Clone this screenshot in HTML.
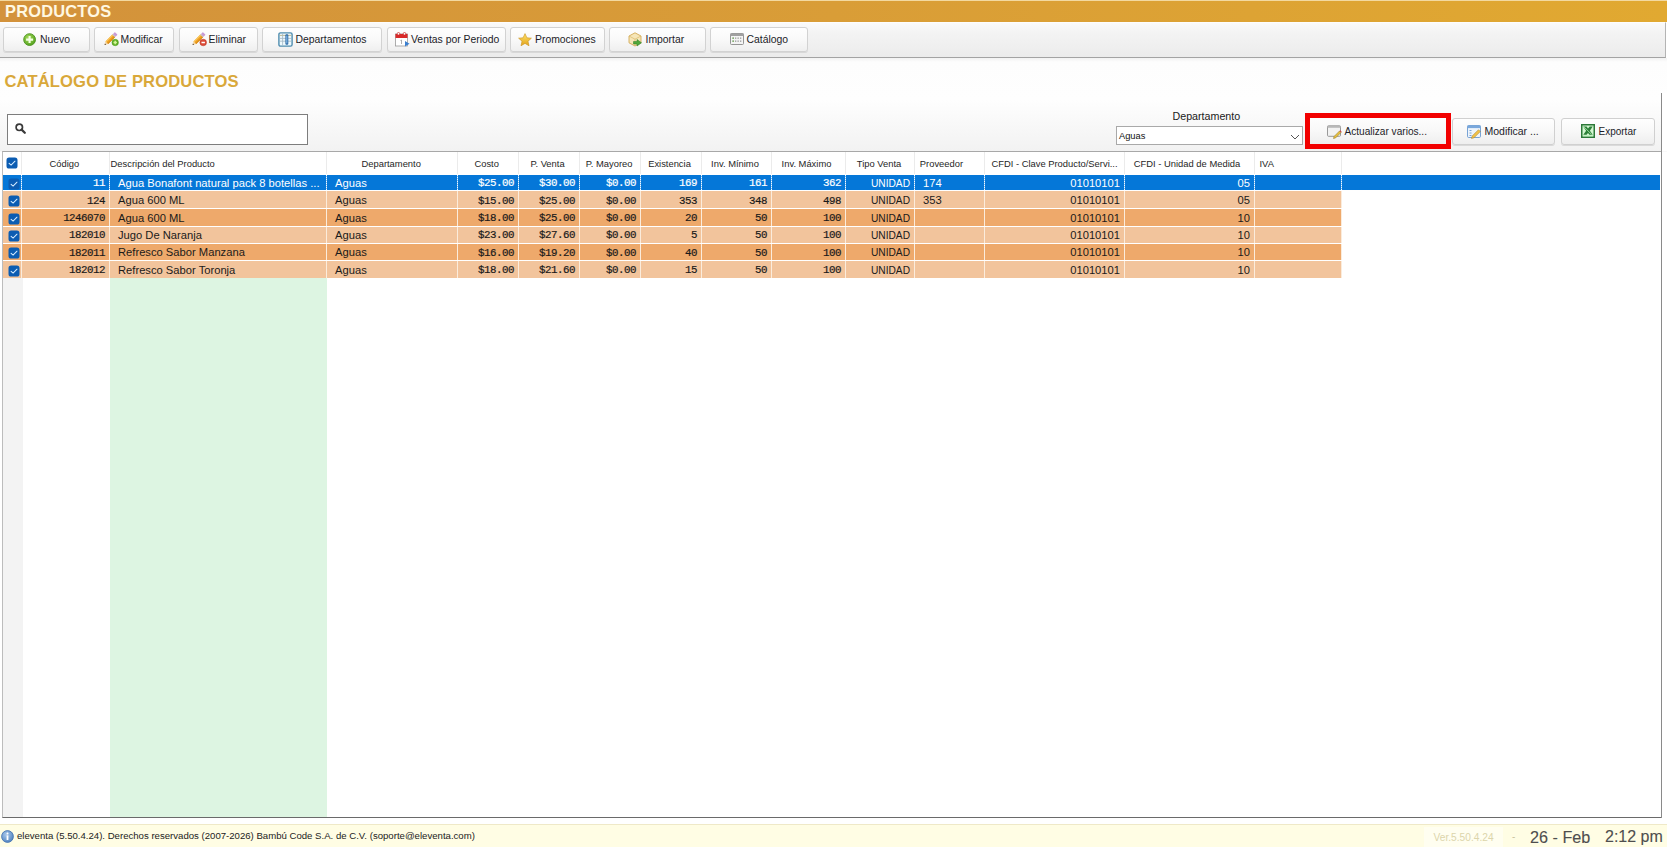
<!DOCTYPE html>
<html><head><meta charset="utf-8"><style>
*{margin:0;padding:0;box-sizing:border-box}
html,body{width:1667px;height:847px;overflow:hidden;background:#fff;font-family:"Liberation Sans",sans-serif;position:relative}
svg{display:block}
.ico{position:absolute}
#title{position:absolute;left:0;top:0;width:1667px;height:22px;background:linear-gradient(to right,#d3923b,#d99d37 50%,#e1a931);border-top:1px solid #f3d9a0}
#title span{position:absolute;left:5px;top:0px;font-size:16.4px;font-weight:bold;color:#fff8e2;line-height:20px;letter-spacing:0.22px}
#tb{position:absolute;left:0;top:22px;width:1666px;height:36px;background:linear-gradient(#fafafa,#f3f3f3 30%,#efefef 70%,#ebebeb);border-top:1px solid #fdfdfd;border-bottom:1px solid #a3a3a3;border-right:1px solid #b4b4b4}
.btn{position:absolute;top:27px;height:24.5px;border:1px solid #d2d2d2;border-radius:3px;background:linear-gradient(#fefefe,#f9f9f9 50%,#efefef);box-shadow:0 1px 0 #d8d8d8}
.bt{position:absolute;font-size:10.4px;color:#1c1c28;line-height:12px;white-space:nowrap}
#panel{position:absolute;left:0;top:58px;width:1667px;height:766px;background:linear-gradient(#f2f2f2 0px,#fdfdfd 4px,#fefefe 42px,#f2f2f2 93px,#ffffff 94px,#ffffff 766px)}
#cat{position:absolute;left:4.5px;top:72.1px;font-size:16.6px;font-weight:bold;color:#d9a83a;line-height:20px;letter-spacing:0.12px}
#search{position:absolute;left:7px;top:114px;width:301px;height:31px;border:1px solid #7d7d7d;background:#fff}
#grid{position:absolute;left:2px;top:151px;width:1660px;height:667px;border-top:1px solid #a8a8a8;border-left:1px solid #bcbcbc;border-bottom:1px solid #6a6a6a;background:#fff;overflow:hidden}
#rborder{position:absolute;left:1661px;top:93px;width:1px;height:725px;background:#8a8a8a}
.hc{position:absolute;top:0;height:22px;line-height:24px;font-size:9.4px;color:#262626;white-space:nowrap;overflow:hidden}
.hsep{position:absolute;top:0;width:1px;height:22px;background:#ebebeb}
.hcb{position:absolute;left:3px;top:5px}
.row{position:absolute;left:0;background:#fbecdc}
.row .c{position:absolute;top:0;font-size:11.2px;color:#1a1a1a;white-space:nowrap;overflow:hidden}
.row .c span{position:absolute;left:0;right:0;line-height:14px;padding:inherit}
.row .c.mono{font-family:"Liberation Mono",monospace;font-weight:normal;-webkit-text-stroke:0.2px currentColor;font-size:10.8px;letter-spacing:-0.5px}
.row.rl .c{background:#f2c49c}
.row.rd .c{background:#eea96b}
.row.sel{background:repeating-linear-gradient(#f4faff 0 1px,#7ab8ee 1px 2px)}
.row.sel .c{color:#fff;background:#0577d8}
.row.sel .tail{position:absolute;top:0;background:#0577d8}
.row .cb{position:absolute;left:0;top:0;padding-left:5px}
.row.rl .cb{background:#f2c49c}
.row.rd .cb{background:#eea96b}
.row.sel .cb{background:#0577d8}
#emptycb{position:absolute;left:0;top:126px;width:20px;height:540px;background:#f3f3f3}
#emptydesc{position:absolute;left:107px;top:126px;width:217px;height:540px;background:#ddf5e2}
#dlabel{position:absolute;left:1172.5px;top:110px;font-size:10.7px;color:#202020;line-height:12px}
#combo{position:absolute;left:1116px;top:126px;width:187px;height:19px;border:1px solid #a9a9a9;background:#fff}
#combo span{position:absolute;left:2px;top:3px;font-size:9.3px;color:#111;line-height:12px}
#redbox{position:absolute;left:1305px;top:113px;width:146px;height:36px;border:5px solid #f20000}
.btn2{position:absolute;top:118px;height:27px;border:1px solid #d0d0d0;border-radius:3px;background:linear-gradient(#fefefe,#f8f8f8 50%,#eeeeee);box-shadow:0 1px 0 #dadada}
#status{position:absolute;left:0;top:824px;width:1667px;height:23px;background:#fffde4;border-top:1px solid #efe9c8}
#status .t{position:absolute;left:17px;top:5px;font-size:9.6px;color:#222;line-height:12px;white-space:nowrap}
</style></head><body>
<div id="title"><span>PRODUCTOS</span></div>
<div id="tb"></div>
<div class="btn" style="left:3px;width:87px"></div>
<div class="ico" style="left:23px;top:32.5px"><svg width="14" height="14" viewBox="0 0 14 14"><defs><radialGradient id="gn" cx="0.4" cy="0.35" r="0.7"><stop offset="0" stop-color="#a6dc5a"/><stop offset="1" stop-color="#4f9e1c"/></radialGradient></defs><circle cx="6.6" cy="6.6" r="5.9" fill="url(#gn)" stroke="#4a921c" stroke-width="0.9"/><path d="M6.6 3.1V10.1M3.1 6.6H10.1" stroke="#f4ffe6" stroke-width="2.1"/></svg></div>
<div class="bt" style="left:40px;top:34px">Nuevo</div>
<div class="btn" style="left:94px;width:80px"></div>
<div class="ico" style="left:102.5px;top:32px"><svg width="16" height="15" viewBox="0 0 16 15"><g transform="translate(7.4 7.2) rotate(-45)"><path d="M-8.2 0 L-5 -1.9 L-5 1.9 Z" fill="#f3d3a0"/><path d="M-8.2 0 L-6.9 -0.8 L-6.9 0.8 Z" fill="#3a2a1a"/><rect x="-5" y="-1.9" width="9.6" height="3.8" fill="#f0a020"/><rect x="-5" y="-1.9" width="9.6" height="1.2" fill="#f8c860"/><rect x="-5" y="0.9" width="9.6" height="1" fill="#d88a18"/><rect x="4.6" y="-1.9" width="1.1" height="3.8" fill="#b8b0b8"/><rect x="5.7" y="-1.9" width="2.5" height="3.8" rx="0.6" fill="#c89ad6"/></g><circle cx="12.2" cy="10.5" r="3.25" fill="#62b025" stroke="#4a9a1c" stroke-width="0.5"/><path d="M12.2 8.8V12.2M10.5 10.5H13.9" stroke="#d4f59a" stroke-width="1.5"/></svg></div>
<div class="bt" style="left:120.5px;top:34px">Modificar</div>
<div class="btn" style="left:179px;width:79px"></div>
<div class="ico" style="left:191px;top:32px"><svg width="16" height="15" viewBox="0 0 16 15"><g transform="translate(7.4 7.2) rotate(-45)"><path d="M-8.2 0 L-5 -1.9 L-5 1.9 Z" fill="#f3d3a0"/><path d="M-8.2 0 L-6.9 -0.8 L-6.9 0.8 Z" fill="#3a2a1a"/><rect x="-5" y="-1.9" width="9.6" height="3.8" fill="#f0a020"/><rect x="-5" y="-1.9" width="9.6" height="1.2" fill="#f8c860"/><rect x="-5" y="0.9" width="9.6" height="1" fill="#d88a18"/><rect x="4.6" y="-1.9" width="1.1" height="3.8" fill="#b8b0b8"/><rect x="5.7" y="-1.9" width="2.5" height="3.8" rx="0.6" fill="#c89ad6"/></g><circle cx="12.2" cy="10.5" r="3.3" fill="#dc4a36" stroke="#b83422" stroke-width="0.5"/><path d="M10.5 10.5H13.9" stroke="#fff" stroke-width="1.5"/></svg></div>
<div class="bt" style="left:208.5px;top:34px">Eliminar</div>
<div class="btn" style="left:262px;width:120px"></div>
<div class="ico" style="left:278px;top:31.5px"><svg width="15" height="15" viewBox="0 0 15 15"><rect x="0.9" y="0.9" width="13.2" height="13.2" rx="1.6" fill="#eef9fd" stroke="#4f8db0" stroke-width="1.4"/><path d="M1.6 3.4H13.4" stroke="#b9b48a" stroke-width="0.9"/><path d="M1.6 6.4H13.4M1.6 9.2H13.4" stroke="#a2b6c4" stroke-width="0.8"/><path d="M4.6 1.6V13.4" stroke="#a2b6c4" stroke-width="0.8"/><rect x="7.4" y="2.2" width="2.9" height="10.6" rx="1.1" fill="#2f69a6"/><rect x="8.4" y="3.6" width="0.9" height="7.8" fill="#9ad0f4"/></svg></div>
<div class="bt" style="left:295.5px;top:34px">Departamentos</div>
<div class="btn" style="left:387px;width:119px"></div>
<div class="ico" style="left:394.5px;top:31.5px"><svg width="15" height="15" viewBox="0 0 15 15"><rect x="0.5" y="2" width="12" height="12" fill="#fff" stroke="#999" stroke-width="0.8"/><rect x="0.5" y="2" width="12" height="4" fill="#d92a2a"/><circle cx="3.5" cy="1.8" r="1.3" fill="#fff" stroke="#c22" stroke-width="0.7"/><circle cx="9.5" cy="1.8" r="1.3" fill="#fff" stroke="#c22" stroke-width="0.7"/><path d="M5.5 8.5 L6.5 8 V12" stroke="#999" stroke-width="0.8" fill="none"/><path d="M10 9 L14.5 11.7 L10 14.5 Z" fill="#3a7fd0"/></svg></div>
<div class="bt" style="left:411px;top:34px">Ventas por Periodo</div>
<div class="btn" style="left:510px;width:95px"></div>
<div class="ico" style="left:518px;top:32.5px"><svg width="14" height="14" viewBox="0 0 14 14"><defs><linearGradient id="gs" x1="0" y1="0" x2="0" y2="1"><stop offset="0" stop-color="#ffe46a"/><stop offset="1" stop-color="#e2a21a"/></linearGradient></defs><path d="M7 0.6 L8.9 4.8 L13.4 5.2 L10 8.2 L11 12.8 L7 10.4 L3 12.8 L4 8.2 L0.6 5.2 L5.1 4.8 Z" fill="url(#gs)" stroke="#c9911c" stroke-width="0.6"/></svg></div>
<div class="bt" style="left:535px;top:34px">Promociones</div>
<div class="btn" style="left:609px;width:97px"></div>
<div class="ico" style="left:628px;top:32px"><svg width="15" height="15" viewBox="0 0 15 15"><path d="M7 0.8 L13 4 L13 10.8 L7 14 L1 10.8 L1 4 Z" fill="#f6e6b8" stroke="#d2aa55" stroke-width="0.9"/><path d="M1 4 L7 7.2 L13 4 M7 7.2 V14" stroke="#d9b868" stroke-width="0.7" fill="none"/><path d="M5.5 9.5 H9 V7.5 L13.5 10.8 L9 14 V12 H5.5 Z" fill="#4fa83a" stroke="#2f7a22" stroke-width="0.5"/></svg></div>
<div class="bt" style="left:645.5px;top:34px">Importar</div>
<div class="btn" style="left:710px;width:98px"></div>
<div class="ico" style="left:730px;top:33px"><svg width="14" height="12" viewBox="0 0 14 12"><rect x="0.5" y="0.5" width="13" height="11" rx="1" fill="#f4f4f4" stroke="#8a8a8a" stroke-width="0.9"/><rect x="0.5" y="0.5" width="13" height="2.5" fill="#a0a0a0"/><g fill="#9a9a9a"><rect x="2.5" y="4.5" width="1.3" height="1.3"/><rect x="5" y="4.5" width="1.3" height="1.3"/><rect x="7.5" y="4.5" width="1.3" height="1.3"/><rect x="10" y="4.5" width="1.3" height="1.3"/><rect x="2.5" y="7.5" width="1.3" height="1.3"/><rect x="5" y="7.5" width="1.3" height="1.3"/><rect x="7.5" y="7.5" width="1.3" height="1.3"/><rect x="10" y="7.5" width="1.3" height="1.3"/></g><rect x="2.5" y="4.5" width="1.3" height="1.3" fill="#6ab04c"/><rect x="2.5" y="7.5" width="1.3" height="1.3" fill="#6ab04c"/></svg></div>
<div class="bt" style="left:746.5px;top:34px">Catálogo</div>
<div id="panel"></div>
<div id="cat">CATÁLOGO DE PRODUCTOS</div>
<div id="search"><svg style="position:absolute;left:7px;top:8px" width="11" height="11" viewBox="0 0 11 11"><circle cx="4.3" cy="4.3" r="3.2" fill="none" stroke="#3a3a3a" stroke-width="1.7"/><path d="M6.6 6.6 L9.8 9.8" stroke="#3a3a3a" stroke-width="2.2" stroke-linecap="round"/></svg></div>
<div id="dlabel">Departamento</div>
<div id="combo"><span>Aguas</span><div class="ico" style="left:173px;top:7px"><svg width="10" height="6" viewBox="0 0 10 6"><path d="M1 1 L5 5 L9 1" stroke="#555" stroke-width="1" fill="none"/></svg></div></div>
<div class="btn2" style="left:1308px;width:140px;top:116px;height:30px;border-color:#e0e0e0"></div>
<div id="redbox"></div>
<div class="ico" style="left:1327px;top:124.5px"><svg width="15" height="14" viewBox="0 0 15 14"><rect x="0.5" y="0.8" width="13" height="10.5" rx="1" fill="#f2f2f2" stroke="#8f8f8f" stroke-width="0.9"/><rect x="0.5" y="0.8" width="13" height="2" fill="#b8b8b8"/><path d="M6.5 13.5 L7 11.5 L12.5 6 L14 7.5 L8.5 13 Z" fill="#e6c040" stroke="#8a7020" stroke-width="0.5"/><path d="M12.5 6 L13.2 5.3 L14.7 6.8 L14 7.5Z" fill="#d04040"/></svg></div>
<div class="bt" style="left:1344.5px;top:125.5px;font-size:10.1px">Actualizar varios...</div>
<div class="btn2" style="left:1452px;width:103px"></div>
<div class="ico" style="left:1467px;top:124.5px"><svg width="15" height="14" viewBox="0 0 15 14"><rect x="0.5" y="0.5" width="13" height="12" rx="1.2" fill="#eef4fb" stroke="#6a9ad0" stroke-width="0.9"/><rect x="0.5" y="0.5" width="13" height="2.6" fill="#7aa8dc"/><path d="M2.5 5.5H4.5M2.5 8H4.5M2.5 10.5H4.5" stroke="#6a9ad0" stroke-width="0.9"/><path d="M4.5 13.5 L5.2 11 L11.5 4.7 L13.3 6.5 L7 12.8 Z" fill="#f2c24a" stroke="#a07a20" stroke-width="0.5"/></svg></div>
<div class="bt" style="left:1484.5px;top:124.5px;font-size:10.5px">Modificar ...</div>
<div class="btn2" style="left:1561px;width:94px"></div>
<div class="ico" style="left:1581px;top:124px"><svg width="14" height="14" viewBox="0 0 14 14"><rect x="0.75" y="0.75" width="12.5" height="12.5" fill="#d4f7d2" stroke="#2b7838" stroke-width="1.5"/><path d="M2.2 2.5 H5.6 L7 4.5 L8.7 2.5 H11.7 L8.9 6.8 L11.7 10.8 H8.4 L7 8.9 L5.6 10.8 H2.3 L5.1 6.8 Z" fill="#2c8039"/><path d="M2.6 2.6 L10.4 10.2" stroke="#aef0ae" stroke-width="0.8"/><rect x="2" y="11.3" width="10" height="0.9" fill="#bdf2bd"/></svg></div>
<div class="bt" style="left:1598.5px;top:126px;font-size:10px">Exportar</div>
<div id="grid">
<div id="emptycb"></div>
<div id="emptydesc"></div>
<div class="hc" style="left:17.8px;width:87px;text-align:center;">Código</div>
<div class="hsep" style="left:106px"></div>
<div class="hc" style="left:105.6px;width:216px;text-align:left;padding-left:2px;">Descripción del Producto</div>
<div class="hsep" style="left:323px"></div>
<div class="hc" style="left:323.2px;width:130px;text-align:center;">Departamento</div>
<div class="hsep" style="left:454px"></div>
<div class="hc" style="left:453.7px;width:60px;text-align:center;">Costo</div>
<div class="hsep" style="left:515px"></div>
<div class="hc" style="left:514.5px;width:60px;text-align:center;">P. Venta</div>
<div class="hsep" style="left:576px"></div>
<div class="hc" style="left:576.1px;width:60px;text-align:center;">P. Mayoreo</div>
<div class="hsep" style="left:637px"></div>
<div class="hc" style="left:636.5px;width:60px;text-align:center;">Existencia</div>
<div class="hsep" style="left:698px"></div>
<div class="hc" style="left:697.5px;width:69px;text-align:center;">Inv. Mínimo</div>
<div class="hsep" style="left:768px"></div>
<div class="hc" style="left:767px;width:73px;text-align:center;">Inv. Máximo</div>
<div class="hsep" style="left:842px"></div>
<div class="hc" style="left:842px;width:68px;text-align:center;">Tipo Venta</div>
<div class="hsep" style="left:911px"></div>
<div class="hc" style="left:914.8px;width:69px;text-align:left;padding-left:2px;">Proveedor</div>
<div class="hsep" style="left:981px"></div>
<div class="hc" style="left:982px;width:139px;text-align:center;">CFDI - Clave Producto/Servi...</div>
<div class="hsep" style="left:1121px"></div>
<div class="hc" style="left:1119.5px;width:129px;text-align:center;">CFDI - Unidad de Medida</div>
<div class="hsep" style="left:1251px"></div>
<div class="hc" style="left:1254.5px;width:86px;text-align:left;padding-left:2px;">IVA</div>
<div class="hsep" style="left:1338px"></div>
<div class="hcb"><svg class="cbs" width="12" height="12" viewBox="0 0 12 12"><rect x="0.5" y="0.5" width="11" height="11" rx="2.6" fill="#0b5cb2"/><path d="M3.1 6.3 L5.1 8.1 L9 4.2" stroke="#d6ecff" stroke-width="1.05" fill="none" stroke-linecap="round"/></svg></div>
<div class="hsep" style="left:18px"></div>
<div class="row sel" style="top:23px;height:15px;width:1657px">
<div class="cb" style="width:18px;height:15px;padding-top:3px"><svg class="cbs" width="12" height="12" viewBox="0 0 12 12"><rect x="0.5" y="0.5" width="11" height="11" rx="2.6" fill="#0b5cb2"/><path d="M3.1 6.3 L5.1 8.1 L9 4.2" stroke="#d6ecff" stroke-width="1.05" fill="none" stroke-linecap="round"/></svg></div>
<div class="c mono" style="left:19px;width:87px;height:15px;text-align:right;padding-right:4px;"><span style="top:1.10px">11</span></div>
<div class="c txt" style="left:107px;width:216px;height:15px;text-align:left;padding-left:8px;"><span style="top:0.83px">Agua Bonafont natural pack 8 botellas ...</span></div>
<div class="c txt" style="left:324px;width:130px;height:15px;text-align:left;padding-left:8px;"><span style="top:0.83px">Aguas</span></div>
<div class="c mono" style="left:455px;width:60px;height:15px;text-align:right;padding-right:4px;"><span style="top:1.10px">$25.00</span></div>
<div class="c mono" style="left:516px;width:60px;height:15px;text-align:right;padding-right:4px;"><span style="top:1.10px">$30.00</span></div>
<div class="c mono" style="left:577px;width:60px;height:15px;text-align:right;padding-right:4px;"><span style="top:1.10px">$0.00</span></div>
<div class="c mono" style="left:638px;width:60px;height:15px;text-align:right;padding-right:4px;"><span style="top:1.10px">169</span></div>
<div class="c mono" style="left:699px;width:69px;height:15px;text-align:right;padding-right:4px;"><span style="top:1.10px">161</span></div>
<div class="c mono" style="left:769px;width:73px;height:15px;text-align:right;padding-right:4px;"><span style="top:1.10px">362</span></div>
<div class="c txt" style="left:843px;width:68px;height:15px;text-align:right;padding-right:4px;font-size:10.2px;"><span style="top:1.73px">UNIDAD</span></div>
<div class="c txt" style="left:912px;width:69px;height:15px;text-align:left;padding-left:8px;"><span style="top:0.83px">174</span></div>
<div class="c txt" style="left:982px;width:139px;height:15px;text-align:right;padding-right:4px;"><span style="top:0.83px">01010101</span></div>
<div class="c txt" style="left:1122px;width:129px;height:15px;text-align:right;padding-right:4px;"><span style="top:0.83px">05</span></div>
<div class="c txt" style="left:1252px;width:86px;height:15px;text-align:left;padding-left:8px;"><span style="top:0.83px"></span></div>
<div class="tail" style="left:1339px;width:318px;height:15px"></div>
</div>
<div class="row rl" style="top:39px;height:17px;width:1339px">
<div class="cb" style="width:18px;height:17px;padding-top:4px"><svg class="cbs" width="12" height="12" viewBox="0 0 12 12"><rect x="0.5" y="0.5" width="11" height="11" rx="2.6" fill="#0b5cb2"/><path d="M3.1 6.3 L5.1 8.1 L9 4.2" stroke="#d6ecff" stroke-width="1.05" fill="none" stroke-linecap="round"/></svg></div>
<div class="c mono" style="left:19px;width:87px;height:17px;text-align:right;padding-right:4px;"><span style="top:2.50px">124</span></div>
<div class="c txt" style="left:107px;width:216px;height:17px;text-align:left;padding-left:8px;"><span style="top:2.23px">Agua 600 ML</span></div>
<div class="c txt" style="left:324px;width:130px;height:17px;text-align:left;padding-left:8px;"><span style="top:2.23px">Aguas</span></div>
<div class="c mono" style="left:455px;width:60px;height:17px;text-align:right;padding-right:4px;"><span style="top:2.50px">$15.00</span></div>
<div class="c mono" style="left:516px;width:60px;height:17px;text-align:right;padding-right:4px;"><span style="top:2.50px">$25.00</span></div>
<div class="c mono" style="left:577px;width:60px;height:17px;text-align:right;padding-right:4px;"><span style="top:2.50px">$0.00</span></div>
<div class="c mono" style="left:638px;width:60px;height:17px;text-align:right;padding-right:4px;"><span style="top:2.50px">353</span></div>
<div class="c mono" style="left:699px;width:69px;height:17px;text-align:right;padding-right:4px;"><span style="top:2.50px">348</span></div>
<div class="c mono" style="left:769px;width:73px;height:17px;text-align:right;padding-right:4px;"><span style="top:2.50px">498</span></div>
<div class="c txt" style="left:843px;width:68px;height:17px;text-align:right;padding-right:4px;font-size:10.2px;"><span style="top:3.13px">UNIDAD</span></div>
<div class="c txt" style="left:912px;width:69px;height:17px;text-align:left;padding-left:8px;"><span style="top:2.23px">353</span></div>
<div class="c txt" style="left:982px;width:139px;height:17px;text-align:right;padding-right:4px;"><span style="top:2.23px">01010101</span></div>
<div class="c txt" style="left:1122px;width:129px;height:17px;text-align:right;padding-right:4px;"><span style="top:2.23px">05</span></div>
<div class="c txt" style="left:1252px;width:86px;height:17px;text-align:left;padding-left:8px;"><span style="top:2.23px"></span></div>
</div>
<div class="row rd" style="top:57px;height:17px;width:1339px">
<div class="cb" style="width:18px;height:17px;padding-top:4px"><svg class="cbs" width="12" height="12" viewBox="0 0 12 12"><rect x="0.5" y="0.5" width="11" height="11" rx="2.6" fill="#0b5cb2"/><path d="M3.1 6.3 L5.1 8.1 L9 4.2" stroke="#d6ecff" stroke-width="1.05" fill="none" stroke-linecap="round"/></svg></div>
<div class="c mono" style="left:19px;width:87px;height:17px;text-align:right;padding-right:4px;"><span style="top:1.90px">1246070</span></div>
<div class="c txt" style="left:107px;width:216px;height:17px;text-align:left;padding-left:8px;"><span style="top:1.63px">Agua 600 ML</span></div>
<div class="c txt" style="left:324px;width:130px;height:17px;text-align:left;padding-left:8px;"><span style="top:1.63px">Aguas</span></div>
<div class="c mono" style="left:455px;width:60px;height:17px;text-align:right;padding-right:4px;"><span style="top:1.90px">$18.00</span></div>
<div class="c mono" style="left:516px;width:60px;height:17px;text-align:right;padding-right:4px;"><span style="top:1.90px">$25.00</span></div>
<div class="c mono" style="left:577px;width:60px;height:17px;text-align:right;padding-right:4px;"><span style="top:1.90px">$0.00</span></div>
<div class="c mono" style="left:638px;width:60px;height:17px;text-align:right;padding-right:4px;"><span style="top:1.90px">20</span></div>
<div class="c mono" style="left:699px;width:69px;height:17px;text-align:right;padding-right:4px;"><span style="top:1.90px">50</span></div>
<div class="c mono" style="left:769px;width:73px;height:17px;text-align:right;padding-right:4px;"><span style="top:1.90px">100</span></div>
<div class="c txt" style="left:843px;width:68px;height:17px;text-align:right;padding-right:4px;font-size:10.2px;"><span style="top:2.53px">UNIDAD</span></div>
<div class="c txt" style="left:912px;width:69px;height:17px;text-align:left;padding-left:8px;"><span style="top:1.63px"></span></div>
<div class="c txt" style="left:982px;width:139px;height:17px;text-align:right;padding-right:4px;"><span style="top:1.63px">01010101</span></div>
<div class="c txt" style="left:1122px;width:129px;height:17px;text-align:right;padding-right:4px;"><span style="top:1.63px">10</span></div>
<div class="c txt" style="left:1252px;width:86px;height:17px;text-align:left;padding-left:8px;"><span style="top:1.63px"></span></div>
</div>
<div class="row rl" style="top:75px;height:16px;width:1339px">
<div class="cb" style="width:18px;height:16px;padding-top:3px"><svg class="cbs" width="12" height="12" viewBox="0 0 12 12"><rect x="0.5" y="0.5" width="11" height="11" rx="2.6" fill="#0b5cb2"/><path d="M3.1 6.3 L5.1 8.1 L9 4.2" stroke="#d6ecff" stroke-width="1.05" fill="none" stroke-linecap="round"/></svg></div>
<div class="c mono" style="left:19px;width:87px;height:16px;text-align:right;padding-right:4px;"><span style="top:1.30px">182010</span></div>
<div class="c txt" style="left:107px;width:216px;height:16px;text-align:left;padding-left:8px;"><span style="top:1.03px">Jugo De Naranja</span></div>
<div class="c txt" style="left:324px;width:130px;height:16px;text-align:left;padding-left:8px;"><span style="top:1.03px">Aguas</span></div>
<div class="c mono" style="left:455px;width:60px;height:16px;text-align:right;padding-right:4px;"><span style="top:1.30px">$23.00</span></div>
<div class="c mono" style="left:516px;width:60px;height:16px;text-align:right;padding-right:4px;"><span style="top:1.30px">$27.60</span></div>
<div class="c mono" style="left:577px;width:60px;height:16px;text-align:right;padding-right:4px;"><span style="top:1.30px">$0.00</span></div>
<div class="c mono" style="left:638px;width:60px;height:16px;text-align:right;padding-right:4px;"><span style="top:1.30px">5</span></div>
<div class="c mono" style="left:699px;width:69px;height:16px;text-align:right;padding-right:4px;"><span style="top:1.30px">50</span></div>
<div class="c mono" style="left:769px;width:73px;height:16px;text-align:right;padding-right:4px;"><span style="top:1.30px">100</span></div>
<div class="c txt" style="left:843px;width:68px;height:16px;text-align:right;padding-right:4px;font-size:10.2px;"><span style="top:1.93px">UNIDAD</span></div>
<div class="c txt" style="left:912px;width:69px;height:16px;text-align:left;padding-left:8px;"><span style="top:1.03px"></span></div>
<div class="c txt" style="left:982px;width:139px;height:16px;text-align:right;padding-right:4px;"><span style="top:1.03px">01010101</span></div>
<div class="c txt" style="left:1122px;width:129px;height:16px;text-align:right;padding-right:4px;"><span style="top:1.03px">10</span></div>
<div class="c txt" style="left:1252px;width:86px;height:16px;text-align:left;padding-left:8px;"><span style="top:1.03px"></span></div>
</div>
<div class="row rd" style="top:92px;height:16px;width:1339px">
<div class="cb" style="width:18px;height:16px;padding-top:3px"><svg class="cbs" width="12" height="12" viewBox="0 0 12 12"><rect x="0.5" y="0.5" width="11" height="11" rx="2.6" fill="#0b5cb2"/><path d="M3.1 6.3 L5.1 8.1 L9 4.2" stroke="#d6ecff" stroke-width="1.05" fill="none" stroke-linecap="round"/></svg></div>
<div class="c mono" style="left:19px;width:87px;height:16px;text-align:right;padding-right:4px;"><span style="top:1.70px">182011</span></div>
<div class="c txt" style="left:107px;width:216px;height:16px;text-align:left;padding-left:8px;"><span style="top:1.43px">Refresco Sabor Manzana</span></div>
<div class="c txt" style="left:324px;width:130px;height:16px;text-align:left;padding-left:8px;"><span style="top:1.43px">Aguas</span></div>
<div class="c mono" style="left:455px;width:60px;height:16px;text-align:right;padding-right:4px;"><span style="top:1.70px">$16.00</span></div>
<div class="c mono" style="left:516px;width:60px;height:16px;text-align:right;padding-right:4px;"><span style="top:1.70px">$19.20</span></div>
<div class="c mono" style="left:577px;width:60px;height:16px;text-align:right;padding-right:4px;"><span style="top:1.70px">$0.00</span></div>
<div class="c mono" style="left:638px;width:60px;height:16px;text-align:right;padding-right:4px;"><span style="top:1.70px">40</span></div>
<div class="c mono" style="left:699px;width:69px;height:16px;text-align:right;padding-right:4px;"><span style="top:1.70px">50</span></div>
<div class="c mono" style="left:769px;width:73px;height:16px;text-align:right;padding-right:4px;"><span style="top:1.70px">100</span></div>
<div class="c txt" style="left:843px;width:68px;height:16px;text-align:right;padding-right:4px;font-size:10.2px;"><span style="top:2.33px">UNIDAD</span></div>
<div class="c txt" style="left:912px;width:69px;height:16px;text-align:left;padding-left:8px;"><span style="top:1.43px"></span></div>
<div class="c txt" style="left:982px;width:139px;height:16px;text-align:right;padding-right:4px;"><span style="top:1.43px">01010101</span></div>
<div class="c txt" style="left:1122px;width:129px;height:16px;text-align:right;padding-right:4px;"><span style="top:1.43px">10</span></div>
<div class="c txt" style="left:1252px;width:86px;height:16px;text-align:left;padding-left:8px;"><span style="top:1.43px"></span></div>
</div>
<div class="row rl" style="top:109px;height:17px;width:1339px">
<div class="cb" style="width:18px;height:17px;padding-top:4px"><svg class="cbs" width="12" height="12" viewBox="0 0 12 12"><rect x="0.5" y="0.5" width="11" height="11" rx="2.6" fill="#0b5cb2"/><path d="M3.1 6.3 L5.1 8.1 L9 4.2" stroke="#d6ecff" stroke-width="1.05" fill="none" stroke-linecap="round"/></svg></div>
<div class="c mono" style="left:19px;width:87px;height:17px;text-align:right;padding-right:4px;"><span style="top:2.10px">182012</span></div>
<div class="c txt" style="left:107px;width:216px;height:17px;text-align:left;padding-left:8px;"><span style="top:1.83px">Refresco Sabor Toronja</span></div>
<div class="c txt" style="left:324px;width:130px;height:17px;text-align:left;padding-left:8px;"><span style="top:1.83px">Aguas</span></div>
<div class="c mono" style="left:455px;width:60px;height:17px;text-align:right;padding-right:4px;"><span style="top:2.10px">$18.00</span></div>
<div class="c mono" style="left:516px;width:60px;height:17px;text-align:right;padding-right:4px;"><span style="top:2.10px">$21.60</span></div>
<div class="c mono" style="left:577px;width:60px;height:17px;text-align:right;padding-right:4px;"><span style="top:2.10px">$0.00</span></div>
<div class="c mono" style="left:638px;width:60px;height:17px;text-align:right;padding-right:4px;"><span style="top:2.10px">15</span></div>
<div class="c mono" style="left:699px;width:69px;height:17px;text-align:right;padding-right:4px;"><span style="top:2.10px">50</span></div>
<div class="c mono" style="left:769px;width:73px;height:17px;text-align:right;padding-right:4px;"><span style="top:2.10px">100</span></div>
<div class="c txt" style="left:843px;width:68px;height:17px;text-align:right;padding-right:4px;font-size:10.2px;"><span style="top:2.73px">UNIDAD</span></div>
<div class="c txt" style="left:912px;width:69px;height:17px;text-align:left;padding-left:8px;"><span style="top:1.83px"></span></div>
<div class="c txt" style="left:982px;width:139px;height:17px;text-align:right;padding-right:4px;"><span style="top:1.83px">01010101</span></div>
<div class="c txt" style="left:1122px;width:129px;height:17px;text-align:right;padding-right:4px;"><span style="top:1.83px">10</span></div>
<div class="c txt" style="left:1252px;width:86px;height:17px;text-align:left;padding-left:8px;"><span style="top:1.83px"></span></div>
</div>
</div>
<div id="rborder"></div>
<div style="position:absolute;left:1662px;top:93px;width:5px;height:58px;background:#fff"></div>
<div id="status"><div class="ico" style="left:1px;top:4.5px"><svg width="13" height="13" viewBox="0 0 13 13"><defs><radialGradient id="gi" cx="0.4" cy="0.35" r="0.7"><stop offset="0" stop-color="#a9c8ea"/><stop offset="1" stop-color="#4f82c0"/></radialGradient></defs><circle cx="6.5" cy="6.5" r="5.9" fill="url(#gi)" stroke="#3f6fae" stroke-width="0.8"/><rect x="5.6" y="5.4" width="1.8" height="4.6" fill="#fff"/><circle cx="6.5" cy="3.6" r="1" fill="#fff"/></svg></div><div class="t">eleventa (5.50.4.24). Derechos reservados (2007-2026) Bambú Code S.A. de C.V. (soporte@eleventa.com)</div>
<div style="position:absolute;left:1424px;top:2px;width:79px;height:21px;background:#fffef0"></div>
<div class="t" style="left:1433.5px;top:7px;font-size:10.2px;color:#dcd5ab">Ver.5.50.4.24</div>
<div class="t" style="left:1512px;top:6px;font-size:10px;color:#c8c3a0">-</div>
<div class="t" style="left:1530px;top:2.5px;font-size:16.2px;line-height:18px;color:#4e4e4e;-webkit-text-stroke:0.1px #505050">26 - Feb</div>
<div class="t" style="left:1605px;top:2.5px;font-size:16px;line-height:18px;color:#4e4e4e;-webkit-text-stroke:0.1px #505050">2:12 pm</div>
</div>
</body></html>
